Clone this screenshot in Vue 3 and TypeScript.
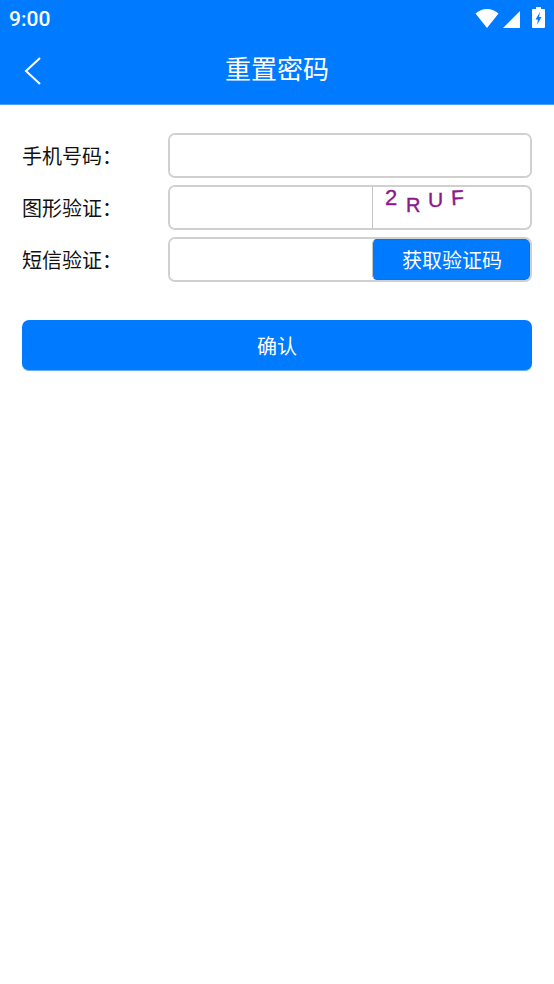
<script setup lang="ts">
const captcha = [
  { ch: '2', cls: 'c1' },
  { ch: 'R', cls: 'c2' },
  { ch: 'U', cls: 'c3' },
  { ch: 'F', cls: 'c4' },
]
</script>

<template>
  <div class="page">
    <header class="top">
      <div class="status">
        <span class="time">9:00</span>
        <div class="sys">
          <svg class="wifi" width="24" height="19" viewBox="0 0 24 19"><path d="M0.500 4.500C3.500 1.800 7.500 0 12 0s8.500 1.800 11.500 4.500L12 19z" fill="#fff"/></svg>
          <svg class="signal" width="17" height="17" viewBox="0 0 17 17"><path d="M0 17L17 0v17z" fill="#fff"/></svg>
          <svg class="battery" width="13" height="21" viewBox="0 0 13 21"><path d="M4 0h5v2h3a1 1 0 0 1 1 1v17a1 1 0 0 1-1 1H1a1 1 0 0 1-1-1V3a1 1 0 0 1 1-1h3z" fill="#fff"/><path d="M8 5L3.500 12.500H6L5 18 9.500 10H7z" fill="#007aff"/></svg>
        </div>
      </div>
      <div class="nav">
        <svg class="back" width="18" height="28" viewBox="0 0 18 28"><path d="M16 1L2 14 16 27" fill="none" stroke="#fff" stroke-width="2"/></svg>
        <h1 class="title">重置密码</h1>
      </div>
    </header>

    <main class="form">
      <div class="row">
        <label class="label">手机号码：</label>
        <div class="field"><input class="input" type="text" /></div>
      </div>
      <div class="row">
        <label class="label">图形验证：</label>
        <div class="field">
          <input class="input" type="text" />
          <div class="captcha">
            <span v-for="c in captcha" :key="c.ch" class="glyph" :class="c.cls">{{ c.ch }}</span>
          </div>
        </div>
      </div>
      <div class="row">
        <label class="label">短信验证：</label>
        <div class="field">
          <input class="input" type="text" />
          <button class="send" type="button">获取验证码</button>
        </div>
      </div>
      <button class="confirm" type="button">确认</button>
    </main>
  </div>
</template>

<style>
html, body { margin: 0; background: #fff; }
</style>

<style scoped>
.page {
  width: 554px;
  height: 984px;
  background: #fff;
  font-family: "Noto Sans CJK SC", "Noto Sans", sans-serif;
  overflow: hidden;
}
.top {
  height: 104px;
  background: #007aff;
  border-bottom: 1px solid #4d9fff;
  box-sizing: content-box;
  color: #fff;
}
.status {
  height: 38px;
  padding: 0 9px 0 9px;
  display: flex;
  align-items: center;
  justify-content: space-between;
}
.time {
  font-family: Roboto, sans-serif;
  font-size: 21px;
  font-weight: 500;
  line-height: 38px;
}
.sys {
  display: flex;
  align-items: flex-end;
  height: 21px;
  margin-top: -3px;
  margin-right: 0;
}
.wifi { margin-right: 4px; }
.signal { margin-right: 12px; }
.nav {
  position: relative;
  height: 66px;
  display: flex;
  align-items: center;
  justify-content: center;
}
.back {
  position: absolute;
  left: 24px;
  top: 19px;
}
.title {
  margin: 0;
  font-size: 26px;
  font-weight: 400;
  line-height: 1;
  transform: translateY(-3px);
}
.form {
  padding: 28px 22px 0;
}
.row {
  display: flex;
  align-items: center;
  height: 45px;
  margin-bottom: 7px;
}
.label {
  width: 146px;
  flex: none;
  font-size: 20px;
  color: #111;
  line-height: 46px;
}
.field {
  flex: 1;
  height: 45px;
  box-sizing: border-box;
  border: 2px solid #d0d0d0;
  border-radius: 7px;
  display: flex;
  overflow: hidden;
}
.input {
  flex: 1;
  min-width: 0;
  border: 0;
  padding: 0;
  outline: 0;
  background: #fff;
}
.captcha {
  position: relative;
  box-sizing: border-box;
  width: 158px;
  flex: none;
  border-left: 1px solid #c4c4c4;
}
.glyph {
  position: absolute;
  font-family: "Liberation Sans", sans-serif;
  color: #8b1a8b;
  -webkit-text-stroke: 0.4px #8b1a8b;
  line-height: 20px;
  font-size: 21px;
}
.c1 { left: 12px; top: 2px; font-size: 22px; line-height: 17px; }
.c2 { left: 33px; top: 8px; font-size: 20px; }
.c3 { left: 55px; top: 3px; }
.c4 { left: 78px; top: 1px; transform: rotate(-3deg); }
.send {
  box-sizing: border-box;
  width: 158px;
  flex: none;
  border: 1px solid #1570d4;
  border-left: 1px solid #c4c4c4;
  border-radius: 5px;
  padding: 0 0 0 2px;
  background: #007aff;
  color: #fff;
  font: inherit;
  font-size: 20px;
}
.confirm {
  display: block;
  width: 100%;
  height: 51px;
  margin-top: 38px;
  border: 0;
  border-bottom: 1px solid #66afff;
  border-radius: 7px;
  background: #007aff;
  color: #fff;
  font: inherit;
  font-size: 20px;
}
</style>
